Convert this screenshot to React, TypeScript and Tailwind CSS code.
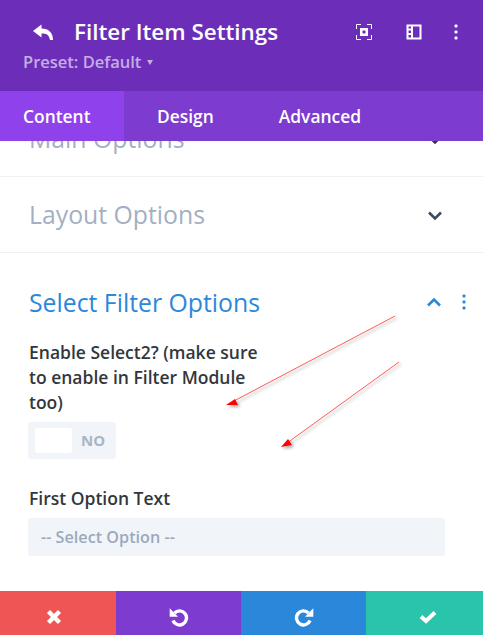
const font = { fontFamily: '"Open Sans", sans-serif' }

const Chevron = ({ up, className }: { up?: boolean; className: string }) => (
  <svg width="16" height="10" viewBox="0 0 16 10" className={className}>
    <path d={up ? 'M2 8.5 L8 2.5 L14 8.5' : 'M2 1.5 L8 7.5 L14 1.5'} fill="none" stroke="currentColor" strokeWidth="2.6" />
  </svg>
)

const Dots = ({ className }: { className: string }) => (
  <svg width="4" height="16" viewBox="0 0 4 16" className={className}>
    <rect x="0.5" y="0.5" width="3" height="3" rx="1" fill="currentColor" />
    <rect x="0.5" y="6.5" width="3" height="3" rx="1" fill="currentColor" />
    <rect x="0.5" y="12.5" width="3" height="3" rx="1" fill="currentColor" />
  </svg>
)

const Arrows = () => (
  <svg width="483" height="635" className="absolute top-0 left-0 pointer-events-none">
    <defs>
      <filter id="arrow-shadow" x="-20%" y="-20%" width="140%" height="140%">
        <feDropShadow dx="2" dy="2" stdDeviation="1.5" floodColor="#000" floodOpacity="0.35" />
      </filter>
    </defs>
    <g filter="url(#arrow-shadow)">
      <line x1="395" y1="316" x2="232" y2="402" stroke="#ff5a5a" strokeWidth="1" />
      <polygon points="226,405 235,399 238,405" fill="#f00" />
      <line x1="399" y1="362" x2="287" y2="443" stroke="#ff5a5a" strokeWidth="1" />
      <polygon points="281,447 288,439 292,445" fill="#f00" />
    </g>
  </svg>
)

export default function App() {
  return (
    <div className="relative w-[483px] h-[635px] flex flex-col overflow-hidden bg-white" style={font}>
      <div className="h-[91px] bg-[#6c2eb9] relative shrink-0 flex flex-col pl-[23px] pt-[16px]">
        <div className="flex items-center h-[32px]">
          <svg width="22" height="17" viewBox="0 0 22 17" className="ml-[9px] text-white">
            <path d="M9.5 0.5 L1 7 L9.5 13.5 V9.5 C14.5 9.5 17 10.5 18 16 H21 C21 9 17 4.5 9.5 4.5 Z" fill="currentColor" />
          </svg>
          <span className="ml-[20px] text-[22.4px] font-semibold text-white leading-none">Filter Item Settings</span>
          <div className="ml-auto flex items-center">
            <svg width="16" height="16" viewBox="0 0 16 16" className="text-white">
              <path d="M0.5 5 V0.5 H5 M11 0.5 H15.5 V5 M15.5 11 V15.5 H11 M5 15.5 H0.5 V11" fill="none" stroke="currentColor" />
              <path fillRule="evenodd" d="M4 4 H12 V12 H4 Z M6.5 6.5 V9.5 H9.5 V6.5 Z" fill="currentColor" />
            </svg>
            <svg width="16" height="16" viewBox="0 0 16 16" className="ml-[34px] text-white">
              <path fillRule="evenodd" d="M0.5 0.5 H15.5 V15.5 H0.5 Z M7 2.5 V13.5 H13.5 V2.5 Z M2.5 2.5 V4.5 H5 V2.5 Z M2.5 6.5 V9 H5 V6.5 Z M2.5 11 V13.5 H5 V11 Z" fill="currentColor" />
            </svg>
            <Dots className="ml-[32px] mr-[25px] text-white" />
          </div>
        </div>
        <div className="flex items-center mt-[6px] text-[16.5px] font-semibold text-[#c5aee4] leading-none">
          Preset: Default
          <span className="ml-[6px] w-0 h-0 border-x-[3.5px] border-x-transparent border-t-[5px] border-t-[#c5aee4]" />
        </div>
      </div>
      <div className="h-[50px] bg-[#7d3bcf] flex shrink-0 text-[17.4px] font-semibold text-white relative z-10">
        <div className="w-[124px] bg-[#8f42ec] pl-[23px] flex items-center">Content</div>
        <div className="ml-[33px] flex items-center">Design</div>
        <div className="ml-[65px] flex items-center">Advanced</div>
      </div>
      <div className="flex-1 overflow-hidden relative">
        <div className="-mt-[40px]">
          <div className="h-[76px] border-b border-[#eff1f5] pl-[29px] pr-[40px] flex items-center justify-between">
            <span className="text-[24.8px] text-[#a3b0c2] leading-none">Main Options</span>
            <Chevron className="text-[#32373c] mt-[2px]" />
          </div>
          <div className="h-[76px] border-b border-[#eff1f5] pl-[29px] pr-[40px] flex items-center justify-between">
            <span className="text-[24.8px] text-[#a3b0c2] leading-none">Layout Options</span>
            <Chevron className="text-[#3c4a63] mt-[2px]" />
          </div>
          <div className="pl-[28px] pr-[38px] pt-[35px]">
            <div className="flex items-center justify-between pl-[1px] h-[28px]">
              <span className="text-[24.8px] text-[#2b87da] leading-none">Select Filter Options</span>
              <div className="flex items-center">
                <Chevron up className="text-[#2b87da]" />
                <Dots className="ml-[20px] -mr-[21px] text-[#2b87da]" />
              </div>
            </div>
            <p className="mt-[24px] w-[236px] pl-[1px] text-[17.5px] leading-[25px] font-semibold text-[#32373c]">
              Enable Select2? (make sure to enable in Filter Module too)
            </p>
            <div className="mt-[7px] w-[88px] h-[37px] rounded-[3px] bg-[#f1f5f9] flex items-center pl-[7px]">
              <div className="w-[37px] h-[25px] rounded-[3px] bg-white" />
              <span className="ml-[9px] text-[15px] font-bold text-[#a8b5c6]">NO</span>
            </div>
            <p className="mt-[26px] pl-[1px] text-[17.5px] font-semibold text-[#32373c]">First Option Text</p>
            <div className="mt-[7px] w-[417px] h-[38px] rounded-[3px] bg-[#f1f5f9] pl-[13px] flex items-center text-[16.2px] font-semibold text-[#9ba9be]">
              -- Select Option --
            </div>
          </div>
        </div>
      </div>
      <div className="h-[44px] flex shrink-0 text-white">
        <div className="w-[116px] bg-[#ef5555] flex items-center justify-center">
          <svg width="16" height="16" viewBox="0 0 16 16" className="-ml-[8px] mt-[7px]">
            <path d="M2.5 2.5 L13.5 13.5 M13.5 2.5 L2.5 13.5" stroke="currentColor" strokeWidth="4.4" />
          </svg>
        </div>
        <div className="w-[125px] bg-[#7e3bd0] flex items-center justify-center">
          <svg width="20" height="20" viewBox="0 0 20 20" className="mt-[8px]">
            <path d="M5.5 6 A7 7 0 1 1 4 13.5" fill="none" stroke="currentColor" strokeWidth="3.4" />
            <path d="M0.7 1.3 V9.7 H9 Z" fill="currentColor" />
          </svg>
        </div>
        <div className="w-[125px] bg-[#2b87da] flex items-center justify-center">
          <svg width="20" height="20" viewBox="0 0 20 20" className="mt-[8px]">
            <path d="M14.5 6 A7 7 0 1 0 16 13.5" fill="none" stroke="currentColor" strokeWidth="3.4" />
            <path d="M19.3 1.3 V9.7 H11 Z" fill="currentColor" />
          </svg>
        </div>
        <div className="w-[117px] bg-[#29c4a9] flex items-center justify-center">
          <svg width="18" height="14" viewBox="0 0 18 14" className="ml-[7px] mt-[8px]">
            <path d="M2 6.5 L7 11 L16 2.5" fill="none" stroke="currentColor" strokeWidth="4" />
          </svg>
        </div>
      </div>
      <Arrows />
    </div>
  )
}
